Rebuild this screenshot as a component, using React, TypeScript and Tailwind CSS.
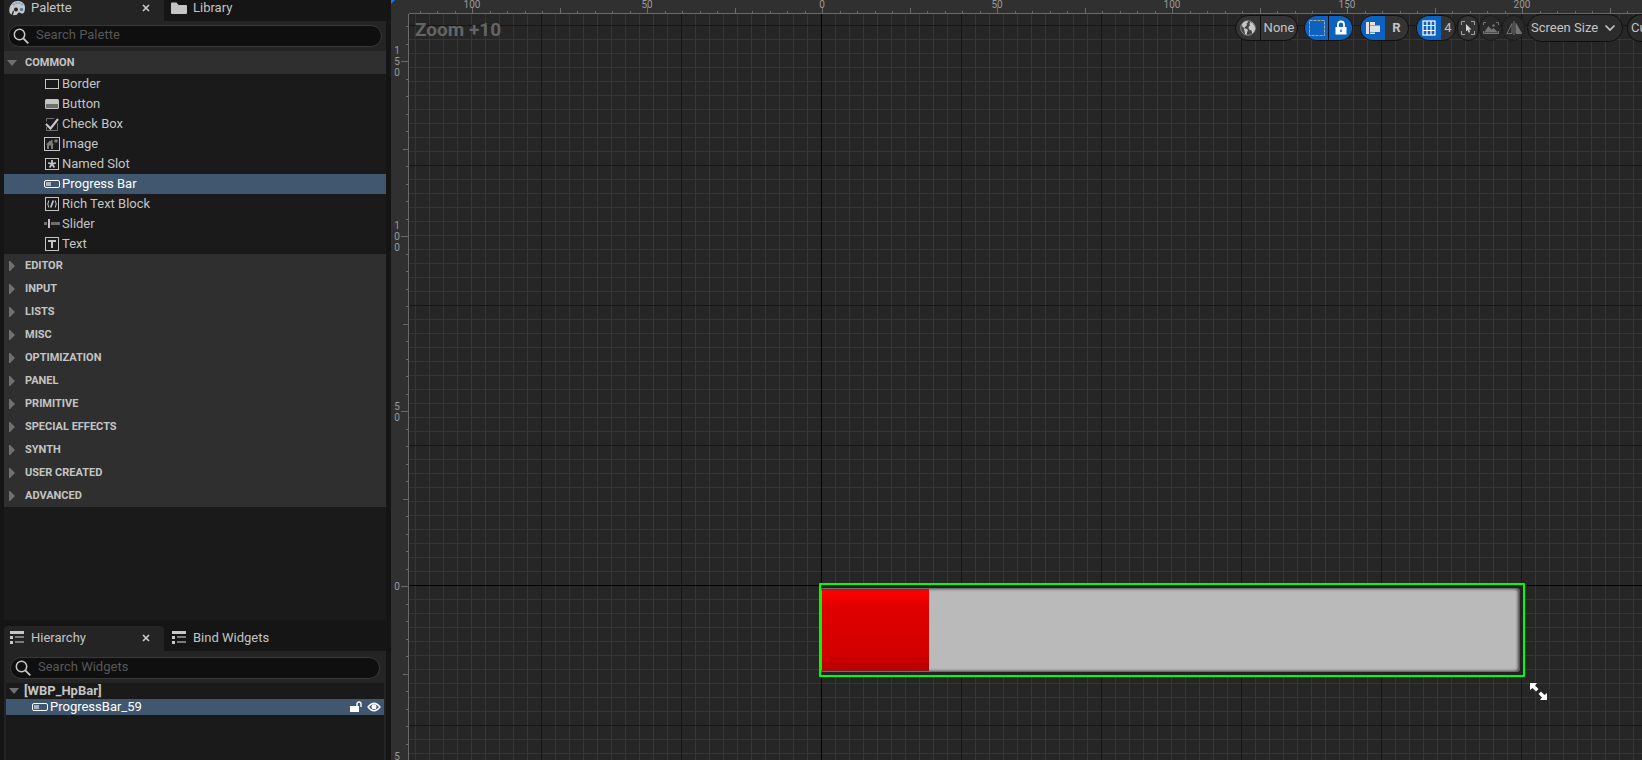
import { useEffect, useState, type ReactNode } from "react";
import clsx from "clsx";

type IconProps = { className?: string };

const BorderIcon = () => (
  <svg width="16" height="16" viewBox="0 0 16 16" fill="none" stroke="currentColor">
    <rect x="1.5" y="3.5" width="13" height="9" />
  </svg>
);

const ButtonIcon = () => (
  <svg width="16" height="16" viewBox="0 0 16 16">
    <rect x="1" y="3" width="14" height="10" rx="1.5" fill="currentColor" />
    <path d="M2 8h12v4H2z" fill="#6e6e6e" />
  </svg>
);

const CheckBoxIcon = () => (
  <svg width="16" height="16" viewBox="0 0 16 16" fill="none">
    <path d="M10 2.5H2.5v3M2.5 11v3.500h11V7" stroke="#6e6e6e" />
    <path d="M2 8l4.500 4.500L14 3" stroke="currentColor" strokeWidth="2.2" />
  </svg>
);

const ImageIcon = () => (
  <svg width="16" height="16" viewBox="0 0 16 16" fill="none">
    <rect x="0.5" y="1.5" width="15" height="13" stroke="currentColor" />
    <path d="M2 8.500L6 4.500l1 1V4h1.500v3L10 8.500H9V13H7V9.500H5V13H3V8.500z" fill="#7c7c7c" />
    <circle cx="12" cy="5" r="1.8" fill="#7c7c7c" />
  </svg>
);

const NamedSlotIcon = () => (
  <svg width="16" height="16" viewBox="0 0 16 16" fill="none" stroke="currentColor">
    <rect x="1.5" y="2.5" width="13" height="11" />
    <path d="M8 8V4M8 8l3.800-1.200M8 8l2.400 3.400M8 8l-2.400 3.400M8 8L4.200 6.800" strokeWidth="1.8" />
  </svg>
);

const ProgressIcon = () => (
  <svg width="16" height="16" viewBox="0 0 16 16" fill="none">
    <rect x="0.5" y="4.5" width="15" height="7" rx="1.5" stroke="currentColor" />
    <rect x="2" y="6" width="5" height="4" fill="currentColor" opacity="0.55" />
  </svg>
);

const RichTextIcon = () => (
  <svg width="16" height="16" viewBox="0 0 16 16" fill="none" stroke="currentColor">
    <rect x="1.5" y="1.5" width="13" height="13" />
    <path d="M4.800 4.500Q2.800 8 4.800 11.500M11.200 4.500q2 3.500 0 7" />
    <path d="M9.300 4.500l-2.600 7" strokeWidth="1.8" />
  </svg>
);

const SliderIcon = () => (
  <svg width="16" height="16" viewBox="0 0 16 16">
    <path d="M0 6h16v3H0z" fill="#6e6e6e" />
    <path d="M3 3h4v10H3z" fill="#1a1a1a" />
    <path d="M4 3h2v9H4z" fill="currentColor" />
  </svg>
);

const TextIcon = () => (
  <svg width="16" height="16" viewBox="0 0 16 16" fill="none" stroke="currentColor">
    <rect x="1.5" y="1.5" width="13" height="13" />
    <path d="M4 5h8M8 5v7" strokeWidth="2" />
  </svg>
);

const PaletteIcon = () => (
  <svg width="16" height="16" viewBox="0 0 16 16">
    <path
      d="M8.500 1C13 1 16 3.600 16 7.500c0 2.500-.4 5.500-2.400 6-1.800.4-2-1.300-3.600-1-1.700.4-1 2.300-3.200 2.600C3.500 15.500.5 14.500.3 11 0 6 3.500 1 8.500 1z"
      fill="#c8c8c8"
    />
    <path d="M4 5q5-4.500 10.500.5" fill="none" stroke="#7ba2c8" strokeWidth="2" strokeDasharray="2 1" />
    <circle cx="7" cy="9.5" r="2" fill="#242424" />
    <circle cx="12.5" cy="9.5" r="1.7" fill="#4f7fb0" />
    <path d="M2.500 14.500l1.500-4 1 .5-1 4z" fill="#242424" />
  </svg>
);

const FolderIcon = () => (
  <svg width="16" height="16" viewBox="0 0 16 16" fill="currentColor">
    <path d="M0 3.500A1 1 0 0 1 1 2.500h4.500L7.500 5H15a1 1 0 0 1 1 1v7a1 1 0 0 1-1 1H1a1 1 0 0 1-1-1z" />
  </svg>
);

const TreeIcon = () => (
  <svg width="16" height="16" viewBox="0 0 16 16">
    <path d="M1 1h14v3H1zM1 6h3v3H1zM1 11h3v3H1z" fill="#c8c8c8" />
    <path d="M6 6h9v2H6zM6 11h9v2H6z" fill="#7c7c7c" />
  </svg>
);

const SearchIcon = () => (
  <svg width="16" height="16" viewBox="0 0 16 16" fill="none" stroke="#c8c8c8" strokeWidth="1.5">
    <circle cx="6.5" cy="6.5" r="5.2" />
    <path d="M10.300 10.300l5 5" strokeWidth="1.8" />
  </svg>
);

const CloseIcon = () => (
  <svg width="8" height="8" viewBox="0 0 8 8" stroke="#c8c8c8" strokeWidth="1.7">
    <path d="M1 1l6 6M7 1L1 7" />
  </svg>
);

const Arrow = ({ open }: { open?: boolean }) => (
  <svg width="10" height="10" viewBox="0 0 10 10" fill="#707070" className="shrink-0">
    {open ? <path d="M0 2h10L5 8z" /> : <path d="M2 0h1l5 5-5 5H2z" />}
  </svg>
);

const UnlockIcon = () => (
  <svg width="12" height="12" viewBox="0 0 12 12" fill="none">
    <path d="M0 5h9v6H0z" fill="#fff" />
    <path d="M7 5V3a2 2 0 0 1 4 0v3" stroke="#fff" strokeWidth="1.4" />
  </svg>
);

const EyeIcon = () => (
  <svg width="14" height="12" viewBox="0 0 14 12" fill="none">
    <path d="M1 6q6-7.500 12 0-6 7.500-12 0z" stroke="#fff" strokeWidth="1.3" />
    <circle cx="7" cy="5.8" r="2.5" fill="#fff" />
  </svg>
);

const GlobeIcon = () => (
  <svg width="16" height="16" viewBox="0 0 16 16">
    <circle cx="8" cy="8" r="7.3" fill="#444444" stroke="#8a8a8a" />
    <path d="M2 4.500C3.500 2 5.500 1 7.500 1L8 2.500 6.500 3.500 7 5 5.500 6.500 4.500 8 2.500 7z" fill="#c8c8c8" />
    <path d="M3.500 8.500L6 8.500 8 10 7 12.500 6.500 15 5 14 4.500 11z" fill="#c8c8c8" />
    <path d="M10 2l2.500 1 2 3 .8 3-1.500 3-1.600 1.500-.7-3L9 9.500 8.500 7 10 5.500 9.500 4z" fill="#c8c8c8" />
  </svg>
);

const OutlineIcon = () => (
  <svg width="18" height="18" viewBox="0 0 18 18" fill="none" stroke="#a9a9a0" strokeDasharray="3 1">
    <rect x="1.5" y="1.5" width="15" height="15" />
  </svg>
);

const LockIcon = () => (
  <svg width="14" height="16" viewBox="0 0 14 16" fill="none">
    <path d="M4 8V4.500a3 3 0 0 1 6 0V8" stroke="#fff" strokeWidth="1.8" />
    <path d="M1.500 7h11v7.500h-11z" fill="#fff" />
    <path d="M6.300 9.500h1.400v2.500H6.300z" fill="#0d62c0" />
  </svg>
);

const LocalizeIcon = () => (
  <svg width="16" height="16" viewBox="0 0 16 16" fill="#e2e2e2">
    <path d="M1 2h3v12H1zM5 2h5v3H5zM5 5.500h10V12H5zM5 12.500h5V14H5z" />
  </svg>
);

const GridIcon = () => (
  <svg width="14" height="16" viewBox="0 0 14 16" fill="none" stroke="#fff" strokeWidth="1.2">
    <rect x="1" y="1" width="12" height="14" />
    <path d="M5 1v14M9 1v14M1 5.500h12M1 10.500h12" />
  </svg>
);

const SelectIcon = () => (
  <svg width="14" height="14" viewBox="0 0 14 14" fill="none" stroke="#a0a0a0">
    <path d="M.5 4V.5H4M10 .5h3.500V4M13.500 10v3.500H10M4 13.500H.5V10" />
    <path d="M5 3l5.500 5.500H8l1.200 2.600-1.400.6L6.600 9 5 10.500z" fill="#d8d8d8" stroke="none" />
  </svg>
);

const PictureIcon = () => (
  <svg width="16" height="12" viewBox="0 0 16 12" fill="none">
    <path d="M.5 3V.5H3M13 .5h2.500V3M.5 9v2.500h15V9" stroke="#747474" />
    <path d="M1 10.500L5.500 4l3 3.500L10.500 6l4.500 4.500z" fill="#747474" />
    <circle cx="10.5" cy="3.5" r="1.2" fill="#747474" />
  </svg>
);

const MirrorIcon = () => (
  <svg width="16" height="14" viewBox="0 0 16 14" fill="none" stroke="#747474">
    <path d="M6 2.500V12.500H1z" />
    <path d="M8 0v14" />
    <path d="M10 2.500V12.500h5.500z" fill="#747474" />
  </svg>
);

const Chevron = ({ className }: IconProps) => (
  <svg width="12" height="8" viewBox="0 0 12 8" fill="none" stroke="#c8c8c8" strokeWidth="1.6" className={className}>
    <path d="M1.500 1.500L6 6l4.500-4.500" />
  </svg>
);

const commonWidgets = [
  { name: "Border", icon: <BorderIcon /> },
  { name: "Button", icon: <ButtonIcon /> },
  { name: "Check Box", icon: <CheckBoxIcon /> },
  { name: "Image", icon: <ImageIcon /> },
  { name: "Named Slot", icon: <NamedSlotIcon /> },
  { name: "Progress Bar", icon: <ProgressIcon /> },
  { name: "Rich Text Block", icon: <RichTextIcon /> },
  { name: "Slider", icon: <SliderIcon /> },
  { name: "Text", icon: <TextIcon /> },
];

const categories = [
  "EDITOR",
  "INPUT",
  "LISTS",
  "MISC",
  "OPTIMIZATION",
  "PANEL",
  "PRIMITIVE",
  "SPECIAL EFFECTS",
  "SYNTH",
  "USER CREATED",
  "ADVANCED",
];

const TabBar = ({ tabs }: { tabs: { name: string; icon: ReactNode }[] }) => (
  <div className="flex h-[25px] shrink-0">
    {tabs.map((tab, i) => (
      <div
        key={tab.name}
        className={clsx("flex items-center px-[5px] pb-[2px]", i === 0 ? "w-40 rounded-t bg-[#242424]" : "pl-[7px]")}
      >
        <button className="flex flex-1 items-center gap-[6px] text-left">
          {tab.icon}
          {tab.name}
        </button>
        {i === 0 && (
          <button aria-label={`Close ${tab.name}`} className="mr-2 p-px">
            <CloseIcon />
          </button>
        )}
      </div>
    ))}
  </div>
);

const SearchBox = ({ label }: { label: string }) => (
  <label className="flex h-[22px] items-center gap-[7px] rounded-full border border-[#383838] bg-[#0f0f0f] px-1">
    <SearchIcon />
    <input
      type="text"
      aria-label={label}
      placeholder={label}
      className="min-w-0 flex-1 bg-transparent pb-[2px] leading-4 outline-none placeholder:text-[#575757]"
    />
  </label>
);

const CategoryHeader = ({ name, open, onClick }: { name: string; open?: boolean; onClick?: () => void }) => (
  <button
    onClick={onClick}
    className="flex h-[23px] w-full items-center gap-2 bg-[#2f2f2f] px-[3px] text-[11px] leading-4 font-bold"
  >
    <Arrow open={open} />
    {name}
  </button>
);

const PalettePanel = () => {
  const [selected, setSelected] = useState("Progress Bar");
  const [open, setOpen] = useState(true);

  return (
    <section className="-mt-1 flex h-[624px] shrink-0 flex-col">
      <TabBar
        tabs={[
          { name: "Palette", icon: <PaletteIcon /> },
          { name: "Library", icon: <FolderIcon /> },
        ]}
      />
      <div className="bg-[#242424] px-1 py-1">
        <SearchBox label="Search Palette" />
      </div>
      <div className="flex-1 bg-[#1a1a1a]">
        <CategoryHeader name="COMMON" open={open} onClick={() => setOpen(!open)} />
        {open && (
          <ul>
            {commonWidgets.map((widget) => (
              <li key={widget.name}>
                <button
                  onClick={() => setSelected(widget.name)}
                  className={clsx(
                    "flex h-5 w-full items-center gap-[2px] pl-10",
                    selected === widget.name && "bg-[#40576f] text-white"
                  )}
                >
                  {widget.icon}
                  {widget.name}
                </button>
              </li>
            ))}
          </ul>
        )}
        {categories.map((name) => (
          <CategoryHeader key={name} name={name} />
        ))}
      </div>
    </section>
  );
};

const HierarchyPanel = () => (
  <section className="mt-[6px] flex flex-1 flex-col">
    <TabBar
      tabs={[
        { name: "Hierarchy", icon: <TreeIcon /> },
        { name: "Bind Widgets", icon: <TreeIcon /> },
      ]}
    />
    <div className="flex flex-1 flex-col bg-[#242424] px-[2px] pt-[6px]">
      <div className="px-1 pb-1">
        <SearchBox label="Search Widgets" />
      </div>
      <div className="flex-1 bg-[#1a1a1a]">
        <button className="flex h-4 w-full items-center gap-[5px] px-[3px] font-bold">
          <Arrow open />
          [WBP_HpBar]
        </button>
        <div className="flex h-4 items-center bg-[#40576f] pr-[3px] pl-[26px] text-white">
          <button className="flex flex-1 items-center gap-[2px]">
            <ProgressIcon />
            ProgressBar_59
          </button>
          <button aria-label="Lock" className="mr-[5px]">
            <UnlockIcon />
          </button>
          <button aria-label="Visibility">
            <EyeIcon />
          </button>
        </div>
      </div>
    </div>
  </section>
);

const useWindowSize = () => {
  const [size, setSize] = useState({ width: window.innerWidth, height: window.innerHeight });

  useEffect(() => {
    const onResize = () => setSize({ width: window.innerWidth, height: window.innerHeight });
    window.addEventListener("resize", onResize);
    return () => window.removeEventListener("resize", onResize);
  }, []);

  return size;
};

// ruler marks: one every 5 units, 3.5px per unit
const marks = (length: number, origin: number) => {
  const from = Math.ceil(-origin / 17.5);
  const to = Math.floor((length - origin) / 17.5);
  return Array.from({ length: to - from + 1 }, (_, i) => {
    const n = from + i;
    return { n, pos: Math.round(origin + n * 17.5), label: n % 10 === 0 ? String(Math.abs(n * 5)) : "" };
  });
};

const TopRuler = () => {
  const { width } = useWindowSize();

  return (
    <svg className="h-[14px] w-full shrink-0 text-[10px]" fill="#9a9a9a">
      <path d="M0 0h4L0 4z" fill="#0d7af0" />
      <rect x="18" y="13" width="100%" height="1" fill="#6a6a6a" />
      {marks(width - 391, 431)
        .filter(({ pos }) => pos > 18)
        .map(({ n, pos, label }) => {
          const size = label ? 6 : n % 5 === 0 ? 5 : 2;
          return (
            <g key={n}>
              <rect x={pos} y={13 - size} width="1" height={size} fill="#6a6a6a" />
              {label && (
                <text x={pos} y="8" textAnchor="middle">
                  {label}
                </text>
              )}
            </g>
          );
        })}
    </svg>
  );
};

const LeftRuler = () => {
  const { height } = useWindowSize();
  const length = height - 14;

  return (
    <svg className="h-full w-[18px] shrink-0 text-[10px]" fill="#9a9a9a">
      <rect x="17" y="0" width="1" height="100%" fill="#6a6a6a" />
      {marks(length + 10, 572).map(({ n, pos, label }) => {
        const size = label ? 7 : n % 5 === 0 ? 5 : 2;
        return (
          <g key={n}>
            <rect x={17 - size} y={pos} width={size} height="1" fill="#6a6a6a" />
            {label.split("").map((digit, i) => {
              const y = pos + 4 + Math.round((i - (label.length - 1) / 2) * 11);
              return (
                y < length + 4 && (
                  <text key={i} x="6" y={y} textAnchor="middle">
                    {digit}
                  </text>
                )
              );
            })}
          </g>
        );
      })}
    </svg>
  );
};

const Grid = () => (
  <svg className="h-full w-full">
    <defs>
      <pattern id="minor" x="6" y="11" width="14" height="14" patternUnits="userSpaceOnUse">
        <path d="M0 0h14v1H1v13H0z" fill="#363636" />
      </pattern>
      <pattern id="major" x="132" y="11" width="140" height="140" patternUnits="userSpaceOnUse">
        <path d="M0 0h140v1H1v139H0z" fill="#161616" />
      </pattern>
    </defs>
    <rect width="100%" height="100%" fill="url(#minor)" />
    <rect width="100%" height="100%" fill="url(#major)" />
    <rect x="412" width="1" height="100%" fill="#000" />
    <rect y="571" width="100%" height="1" fill="#000" />
  </svg>
);

const pill = "flex h-[26px] items-center overflow-hidden rounded-full border border-[#101010] bg-[#343434]";
const dimPill = "flex h-[26px] w-[23px] items-center justify-center rounded-full border border-[#1c1c1c] bg-[#292929]";
const cell = "flex h-full items-center justify-center";

const Toolbar = () => (
  <div className="absolute top-0 right-0 flex h-7 items-center">
    <button className={clsx(pill, "mr-[6px] w-[63px]")}>
      <span className="flex h-full w-[25px] items-center justify-center border-r border-[#101010]">
        <GlobeIcon />
      </span>
      <span className="flex-1">None</span>
    </button>
    <div className={clsx(pill, "mr-[7px] w-[49px]")}>
      <button aria-label="Show outlines" className={clsx(cell, "w-6 border-r border-[#101010] bg-[#0d62c0]")}>
        <OutlineIcon />
      </button>
      <button aria-label="Respect locks" className={clsx(cell, "flex-1 bg-[#0d62c0]")}>
        <LockIcon />
      </button>
    </div>
    <div className={clsx(pill, "mr-[7px] w-[49px]")}>
      <button aria-label="Layout preview" className={clsx(cell, "w-6 bg-[#0d62c0]")}>
        <LocalizeIcon />
      </button>
      <button className={clsx(cell, "flex-1 font-bold")}>R</button>
    </div>
    <div className={clsx(pill, "mr-px w-[40px]")}>
      <button aria-label="Grid snapping" className={clsx(cell, "w-6 bg-[#0d62c0]")}>
        <GridIcon />
      </button>
      <button className={clsx(cell, "flex-1")}>4</button>
    </div>
    <button aria-label="Zoom to fit" className={clsx(pill, "w-[22px] justify-center")}>
      <SelectIcon />
    </button>
    <button aria-label="Background image" className={dimPill}>
      <PictureIcon />
    </button>
    <button aria-label="Flip" className={clsx(dimPill, "mr-[2px]")}>
      <MirrorIcon />
    </button>
    <div className="mr-1 grid h-7 w-[96px] items-center overflow-hidden rounded-full border border-[#101010] bg-[#2c2c2c]">
      <select aria-label="Screen size" className="col-start-1 row-start-1 h-full appearance-none pl-[3px] outline-none">
        <option>Screen Size</option>
      </select>
      <Chevron className="pointer-events-none col-start-1 row-start-1 mr-[6px] justify-self-end" />
    </div>
    <div className="h-7 w-[15px] overflow-hidden rounded-l-full border border-r-0 border-[#101010] bg-[#2c2c2c]">
      <select aria-label="Size rule" className="h-full appearance-none pl-[3px] outline-none">
        <option>Custom</option>
      </select>
    </div>
  </div>
);

const ProgressBar = () => (
  <div className="absolute top-[569px] left-[410px] h-[94px] w-[706px] rounded-[1px] border-2 border-[#00ff00] bg-[#222222] py-[3px] pr-[3px]">
    <div className="flex h-full overflow-hidden rounded-r-[4px] bg-[#bababa] pl-px shadow-[inset_-1px_0_3px_1px_#444444]">
      <div
        className="my-px bg-[linear-gradient(#9a2020,#ff0000_3%,#e00000_22%,#d20000_80%,#b60000_97%,#802020)]"
        style={{ width: `${(107 / 698) * 100}%` }}
      />
    </div>
  </div>
);

const ResizeCursor = () => (
  <svg width="18" height="18" viewBox="0 0 18 18" fill="#fff" className="absolute top-[669px] left-[1121px]">
    <path d="M0 0h7L5 2.500 8.500 6 6 8.500 2.500 5 0 7z" />
    <path d="M17 17h-7l2-2.500L8.500 11 11 8.500l3.500 3.500L17 10z" />
  </svg>
);

export default function App() {
  return (
    <div className="flex h-screen overflow-hidden bg-[#151515] font-[Roboto,sans-serif] text-[13px] text-[#c4c4c4]">
      <aside className="mr-[5px] ml-1 flex w-[382px] shrink-0 flex-col">
        <PalettePanel />
        <HierarchyPanel />
      </aside>
      <main className="flex min-w-0 flex-1 flex-col bg-[#303030]">
        <TopRuler />
        <div className="flex min-h-0 flex-1">
          <LeftRuler />
          <div className="relative min-w-0 flex-1 overflow-hidden bg-[#262626]">
            <Grid />
            <p className="absolute top-1 left-[6px] text-[19px] leading-6 font-bold text-[#646464]">Zoom +10</p>
            <ProgressBar />
            <ResizeCursor />
            <Toolbar />
          </div>
        </div>
      </main>
    </div>
  );
}
